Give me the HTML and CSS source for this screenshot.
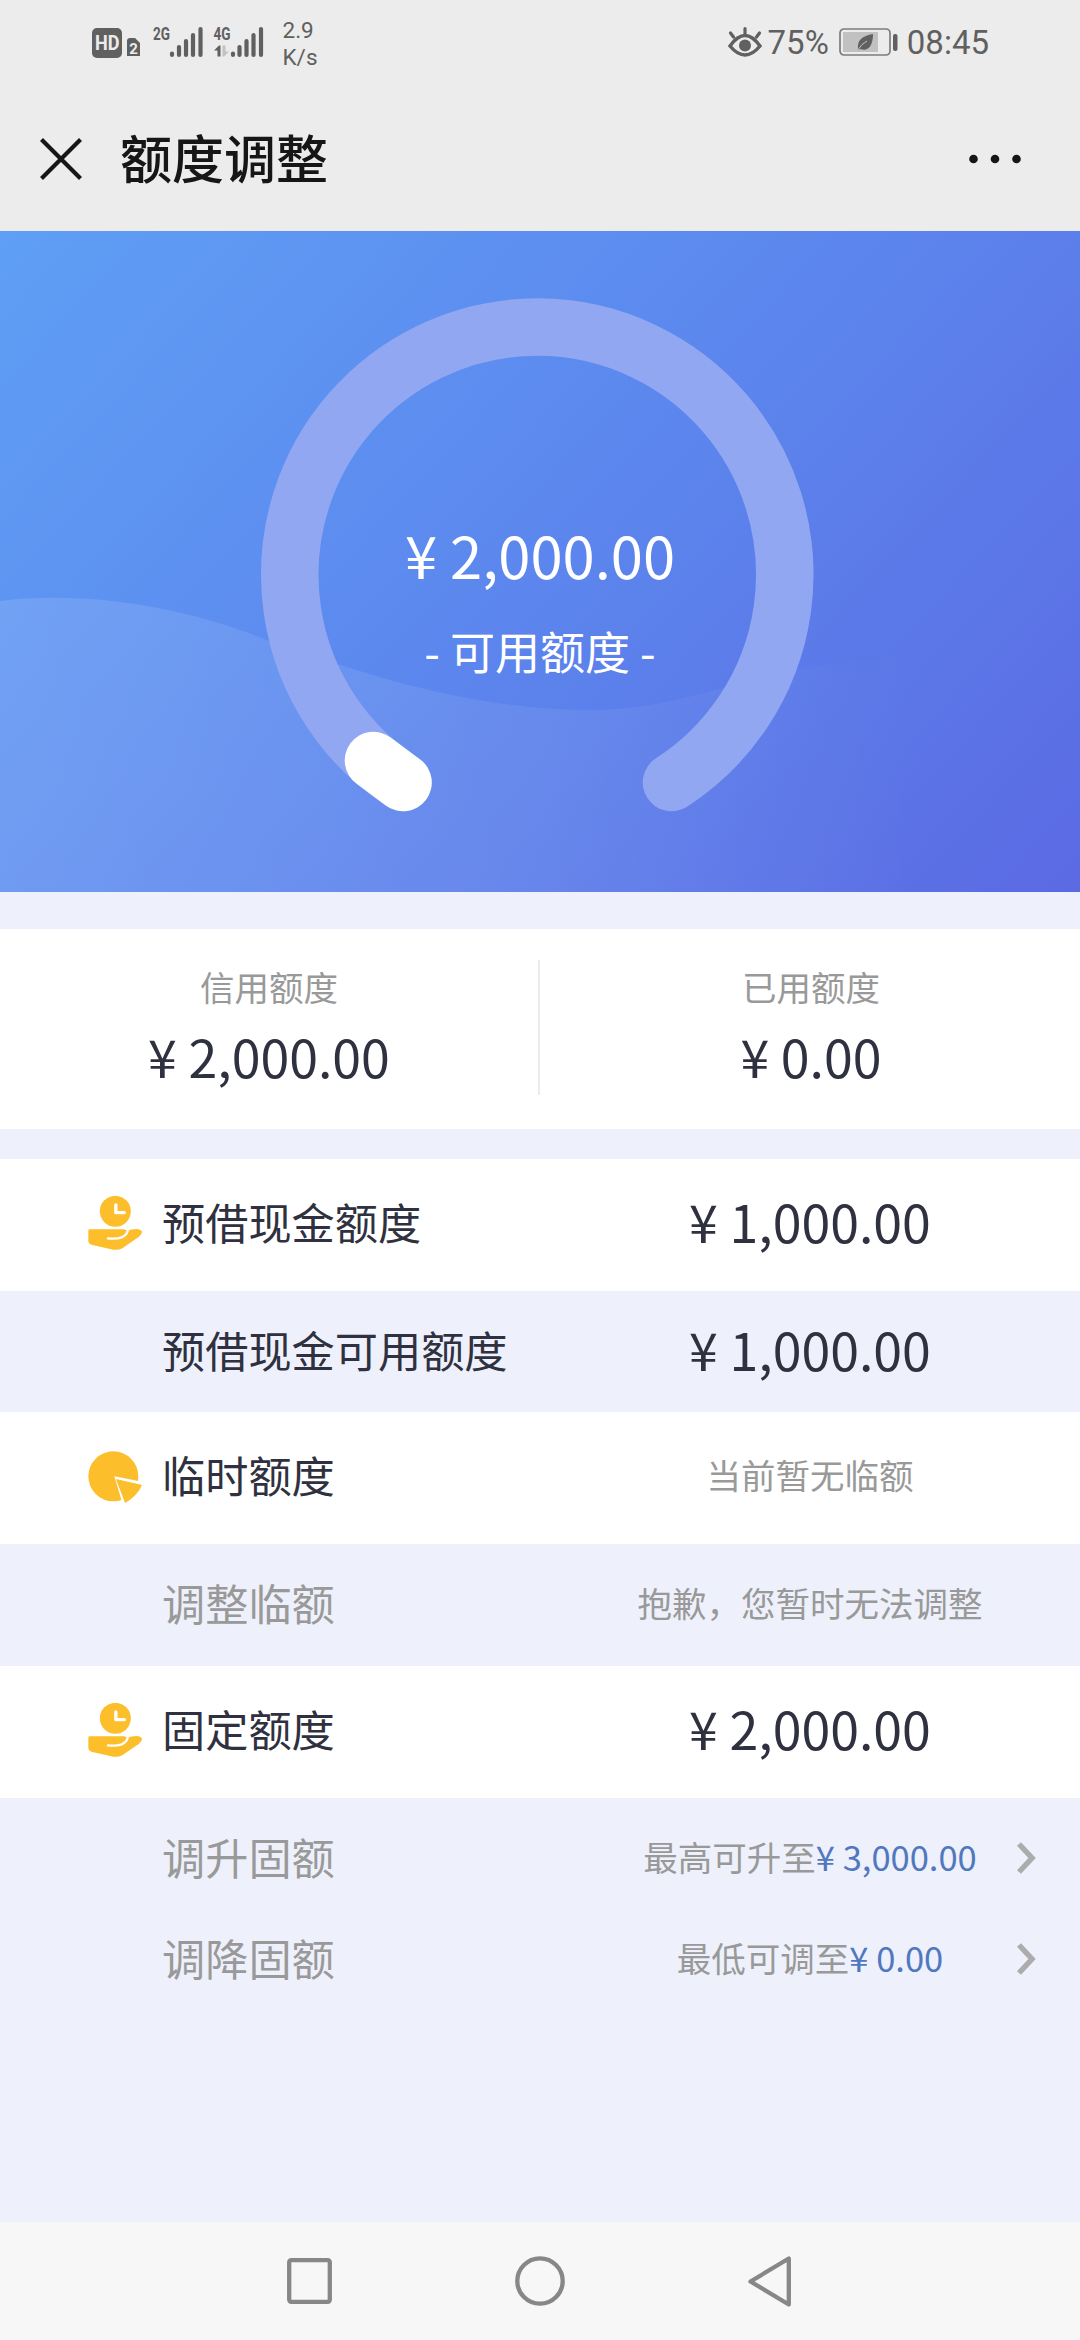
FILE: index.html
```html
<!DOCTYPE html>
<html lang="zh-CN">
<head>
<meta charset="utf-8">
<title>额度调整</title>
<link rel="stylesheet" href="styles.css">
</head>
<body>
<div class="screen">
  <div class="status">
    <svg class="status-signal" width="176" height="46" viewBox="0 -10 176 46">
      <rect x="0" y="3" width="30" height="30" rx="5" fill="#606060"/>
      <text x="3" y="25" class="hd" textLength="24.500" lengthAdjust="spacingAndGlyphs">HD</text>
      <path d="M35 16q0-3 3-3h5l5 5v13h-13z" fill="#606060"/>
      <text x="37.3" y="28.5" class="sim">2</text>
      <text x="61" y="15" class="net" textLength="17" lengthAdjust="spacingAndGlyphs">2G</text>
      <g stroke="#606060" stroke-width="4.2" stroke-linecap="round">
        <path d="M80 28.5v1.5M87 22v8M94 16v14M101 10v20M108.500 4v26"/>
        <path d="M141 28.500v1.500M147.500 22v8M154.500 16v14M161.500 10v20M169 4v26"/>
      </g>
      <text x="121.500" y="15" class="net" textLength="17" lengthAdjust="spacingAndGlyphs">4G</text>
      <path d="M122 25.500l5-5h1.500v11h-3v-6z" fill="#606060"/>
      <path d="M130.500 20.500v11h1.500l5-5h-3.500v-6z" fill="#c2c2c2"/>
    </svg>
    <div class="speed">2.9<br>K/s</div>
    <div class="status-right">
      <svg width="34" height="32" viewBox="0 0 34 32" fill="none" stroke="#606060" stroke-linecap="round">
        <path d="M2 20q15-21 30 0q-15 18-30 0z" stroke-width="3.500"/>
        <path d="M17 2.500v5M2.500 7l3 4M31.500 7l-3 4" stroke-width="3.200"/>
        <circle cx="17" cy="19.500" r="6" fill="#606060" stroke="none"/>
      </svg>
      <span class="battery-pct">75%</span>
      <svg class="battery" width="59" height="28" viewBox="0 0 59 28">
        <rect x="1" y="1" width="50" height="26" rx="4" fill="none" stroke="#7c7c7c" stroke-width="1.700"/>
        <rect x="4" y="4" width="35" height="20" fill="#c1c1c1"/>
        <path d="M19 21c-1-9 4-13 15-15c0 11-4 18-13 15l-2 1.500z" fill="#606060"/>
        <path d="M19 22q3-6 9-9" stroke="#c1c1c1" stroke-width="1" fill="none"/>
        <rect x="54" y="6" width="4.500" height="17" rx="2" fill="#606060"/>
      </svg>
      <span class="clock">08:45</span>
    </div>
  </div>

  <header class="titlebar">
    <svg width="42" height="42" viewBox="0 0 42 42"><path d="M1.500 1.500l39 39M40.500 1.500l-39 39" stroke="#161616" stroke-width="4.200"/></svg>
    <h1>额度调整</h1>
    <svg class="more" width="52" height="10" viewBox="0 0 52 10" fill="#161616"><circle cx="4.500" cy="5" r="4.300"/><circle cx="26" cy="5" r="4.300"/><circle cx="47.500" cy="5" r="4.300"/></svg>
  </header>

  <section class="hero">
    <svg class="hero-art" width="1080" height="661" viewBox="0 231 1080 661">
      <defs>
        <linearGradient id="wave" x1="0" y1="0" x2="1" y2="0">
          <stop offset="0" stop-color="#fff" stop-opacity=".12"/>
          <stop offset=".5" stop-color="#fff" stop-opacity=".07"/>
          <stop offset=".85" stop-color="#fff" stop-opacity="0"/>
        </linearGradient>
      </defs>
      <path d="M0 601C90 590 185 608 262 638C290 650 310 656 344 666C430 694 510 710 592 710C700 710 760 660 890 661C970 662 1030 690 1080 700V892H0Z" fill="url(#wave)"/>
      <g fill="none" stroke-width="57.500" stroke-linecap="round">
        <path d="M403 782.500A247.500 247.500 0 1 1 671.500 782.500" stroke="#92a7f1"/>
        <path d="M403 782.500L373.500 760.500" stroke="#fff"/>
      </g>
    </svg>
    <div class="hero-text">
      <div class="hero-amount">¥ 2,000.00</div>
      <div class="hero-label">- 可用额度 -</div>
    </div>
  </section>

  <section class="summary">
    <div class="summary-cell"><span class="hint">信用额度</span><span class="amount">¥ 2,000.00</span></div>
    <div class="divider"></div>
    <div class="summary-cell"><span class="hint">已用额度</span><span class="amount">¥ 0.00</span></div>
  </section>

  <section class="list">
    <div class="row main">
      <svg class="icon" viewBox="0 0 162 162"><use href="#hand"/></svg>
      <span class="label">预借现金额度</span><span class="value amount">¥ 1,000.00</span>
    </div>
    <div class="row sub">
      <span class="label">预借现金可用额度</span><span class="value amount">¥ 1,000.00</span>
    </div>
    <div class="row main">
      <svg class="icon pie" viewBox="0 0 162 162">
        <circle cx="76" cy="76" r="75" fill="#fcbe2a"/>
        <path d="M79 76L162 92V162H105Z" fill="#fff"/>
        <path d="M86 86L160 103Q148 133 112 154Z" fill="#fcbe2a" stroke="#fcbe2a" stroke-width="3" stroke-linejoin="round"/>
      </svg>
      <span class="label">临时额度</span><span class="value hint">当前暂无临额</span>
    </div>
    <div class="row sub">
      <span class="label off">调整临额</span><span class="value hint">抱歉，您暂时无法调整</span>
    </div>
    <div class="row main">
      <svg class="icon" viewBox="0 0 162 162">
        <g id="hand">
          <circle cx="82" cy="46" r="46.500" fill="#fcbe2a"/>
          <path d="M83.500 27V50H109" fill="none" stroke="#fff" stroke-width="10" stroke-linecap="round" stroke-linejoin="round"/>
          <path d="M5 100H108Q116 101 118 106Q128 99 148 99Q162 101 162 109Q161 116 153 122L103 157Q90 163 76 161L10 146Q1 143 1 136V104Q1 100 5 100Z" fill="#fcbe2a"/>
          <path d="M60 127Q85 130 101 124Q115 118 119 105" fill="none" stroke="#fff" stroke-width="7" stroke-linecap="round"/>
        </g>
      </svg>
      <span class="label">固定额度</span><span class="value amount">¥ 2,000.00</span>
    </div>
    <div class="links">
      <div class="row link">
        <span class="label off">调升固额</span><span class="value hint">最高可升至<b>¥ 3,000.00</b></span>
        <svg class="chevron" viewBox="0 0 20 32"><path d="M3 2L16 16L3 30"/></svg>
      </div>
      <div class="row link">
        <span class="label off">调降固额</span><span class="value hint">最低可调至<b>¥ 0.00</b></span>
        <svg class="chevron" viewBox="0 0 20 32"><path d="M3 2L16 16L3 30"/></svg>
      </div>
    </div>
  </section>

  <nav class="navbar">
    <svg width="45" height="46" viewBox="0 0 45 46"><rect x="2.200" y="2.200" width="40.600" height="41.600" rx="2"/></svg>
    <svg width="50" height="50" viewBox="0 0 50 50"><circle cx="25" cy="25" r="22.700"/></svg>
    <svg width="43" height="51" viewBox="0 0 43 51"><path d="M40.800 2.500V48.500L2.500 25.500Z"/></svg>
  </nav>
</div>
</body>
</html>
```
FILE: styles.css
```css
* { box-sizing: border-box; }
body {
  margin: 0;
  font-family: "Noto Sans CJK SC", sans-serif;
  background: #eef1fb;
}
svg { display: block; flex: none; }
.screen {
  width: 1080px;
  height: 2340px;
  display: flex;
  flex-direction: column;
  overflow: hidden;
}

.status {
  height: 88px;
  flex: none;
  display: flex;
  align-items: flex-start;
  padding: 0 91px 0 92px;
  background: #ececec;
  color: #606060;
  font-family: Roboto, sans-serif;
}
.status-signal { margin-top: 15px; overflow: visible; }
.status-signal text { font-family: Roboto, sans-serif; font-weight: 700; }
.hd { font-size: 20px; fill: #ececec; }
.sim { font-size: 15px; fill: #ececec; }
.net { font-size: 18.500px; fill: #606060; }
.speed {
  margin: 17px 0 0 14.500px;
  font-size: 22.500px;
  line-height: 27px;
}
.status-right {
  margin-left: auto;
  height: 32px;
  margin-top: 26px;
  display: flex;
  align-items: center;
  font-size: 33px;
  line-height: 32px;
}
.battery-pct { margin: 2px 10px 0 6px; }
.battery { margin-right: 9px; }
.clock { margin-top: 2px; }

.titlebar {
  height: 143px;
  flex: none;
  display: flex;
  align-items: center;
  padding: 0 59px 2px 40px;
  background: #ececec;
}
.titlebar h1 {
  margin: 0 0 3px 38px;
  font-size: 52px;
  line-height: 60px;
  font-weight: 500;
  color: #161616;
}
.more { margin-left: auto; }

.hero {
  height: 661px;
  flex: none;
  display: grid;
  background: linear-gradient(133deg, #5f9ff5 0%, #5c88ee 47%, #5b6ae3 100%);
}
.hero-art, .hero-text { grid-area: 1 / 1; }
.hero-text {
  padding-top: 283px;
  color: #fff;
  text-align: center;
}
.hero-amount { font-size: 57.900px; line-height: 80px; }
.hero-label { margin-top: 27px; font-size: 45px; line-height: 60px; }

.summary {
  height: 200px;
  flex: none;
  display: flex;
  margin-top: 37px;
  padding: 31px 0 34px;
  background: #fff;
}
.summary-cell {
  flex: 1;
  display: flex;
  flex-direction: column;
  align-items: center;
}
.summary-cell .hint { line-height: 52px; }
.summary-cell .amount { margin-top: 4px; line-height: 80px; }
.divider { width: 2px; margin-right: 2px; background: #ececec; }

.hint { font-size: 34.500px; color: #999; }
.amount { font-size: 51.840px; color: #2f3140; }

.list { flex: 1; margin-top: 30px; }
.row { display: grid; grid-template-columns: 88px 74px 378px 1fr; align-items: center; }
.row.main { height: 132px; padding-bottom: 8px; background: #fff; }
.row.sub { height: 121.250px; padding-bottom: 5px; }
.row.link { height: 101px; padding-bottom: 4px; }
.links { padding-top: 10px; }
.icon { grid-column: 2; grid-row: 1; width: 54px; height: 54px; margin-top: 4px; }
.icon.pie { margin-top: 7px; }
.label {
  grid-column: 3;
  grid-row: 1;
  font-size: 43.200px;
  line-height: 60px;
  color: #2f3140;
  white-space: nowrap;
}
.label.off { color: #999; }
.value { grid-column: 4; grid-row: 1; line-height: 60px; text-align: center; }
.value b { font-weight: 400; color: #5078c0; }
.chevron {
  grid-column: 4;
  grid-row: 1;
  justify-self: end;
  width: 20px;
  height: 32px;
  margin: 3px 44px 0 0;
  fill: none;
  stroke: #acacac;
  stroke-width: 5.500;
}

.navbar {
  height: 118px;
  flex: none;
  display: flex;
  align-items: center;
  gap: 183px;
  padding-left: 287px;
  background: #f7f7f7;
}
.navbar svg { fill: none; stroke: #878787; stroke-width: 4.300; stroke-linejoin: round; }
```
